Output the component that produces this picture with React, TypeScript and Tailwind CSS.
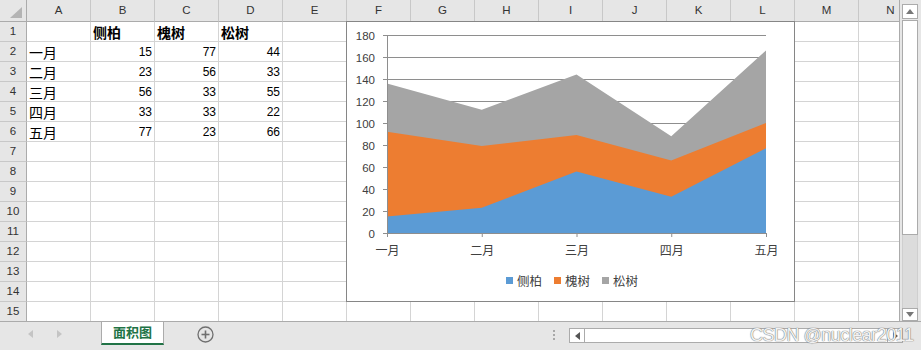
const cols = ['A', 'B', 'C', 'D', 'E', 'F', 'G', 'H', 'I', 'J', 'K', 'L', 'M', 'N']
const months = ['一月', '二月', '三月', '四月', '五月']
const values = [
  [15, 77, 44],
  [23, 56, 33],
  [56, 33, 55],
  [33, 33, 22],
  [77, 23, 66],
]
const heads = ['侧柏', '槐树', '松树']

const Cell = ({ row, col }: { row: number; col: number }) => {
  let content: React.ReactNode = null
  if (row === 1 && col >= 1 && col <= 3) {
    content = <span className="pl-[2px] pb-[1px] text-[14px] font-bold leading-none text-black">{heads[col - 1]}</span>
  } else if (row >= 2 && row <= 6 && col === 0) {
    content = <span className="pl-[2px] pb-[1px] text-[14px] leading-none text-black">{months[row - 2]}</span>
  } else if (row >= 2 && row <= 6 && col >= 1 && col <= 3) {
    content = <span className="ml-auto pr-[2px] pb-[3px] text-[12px] leading-none text-black">{values[row - 2][col - 1]}</span>
  }
  return (
    <div className="flex h-[20px] w-[64px] shrink-0 items-end border-r border-b border-[#d4d4d4] bg-white">
      {content}
    </div>
  )
}

const X0 = 40
const X1 = 419
const Y0 = 211
const k = 1.1
const xs = [0, 1, 2, 3, 4].map((i) => X0 + (i * (X1 - X0)) / 4)
const yv = (v: number) => Y0 - v * k

const cum1 = values.map((v) => v[0])
const cum2 = values.map((v) => v[0] + v[1])
const cum3 = values.map((v) => v[0] + v[1] + v[2])

const area = (arr: number[]) =>
  arr.map((v, i) => `${xs[i]},${yv(v)}`).join(' ') + ` ${X1},${Y0} ${X0},${Y0}`

const AreaChart = () => (
  <svg width="447" height="279" className="block">
    {[20, 40, 60, 80, 100, 120, 140, 160, 180].map((v) => (
      <line key={v} x1={X0} x2={X1} y1={yv(v) + 0.5} y2={yv(v) + 0.5} stroke="#8e8e8e" strokeWidth="1" />
    ))}
    <polygon points={area(cum3)} fill="#a5a5a5" />
    <polygon points={area(cum2)} fill="#ed7d31" />
    <polygon points={area(cum1)} fill="#5b9bd5" />
    <line x1={X0 + 0.5} x2={X0 + 0.5} y1={yv(180)} y2={Y0 + 0.5} stroke="#8e8e8e" />
    <line x1={X0} x2={X1 + 1} y1={Y0 + 0.5} y2={Y0 + 0.5} stroke="#8e8e8e" />
    {[0, 20, 40, 60, 80, 100, 120, 140, 160, 180].map((v) => (
      <g key={v}>
        <line x1={X0 - 4} x2={X0} y1={yv(v) + 0.5} y2={yv(v) + 0.5} stroke="#8e8e8e" />
        <text x={28} y={yv(v) + 4.5} textAnchor="end" fontSize="11.5" fill="#404040">
          {v}
        </text>
      </g>
    ))}
    {xs.map((x, i) => (
      <g key={i}>
        <line x1={x + 0.5} x2={x + 0.5} y1={Y0} y2={Y0 + 4} stroke="#8e8e8e" />
        <text x={x + 0.5} y={Y0 + 22} textAnchor="middle" fontSize="12" fill="#404040">
          {months[i]}
        </text>
      </g>
    ))}
    {[
      ['#5b9bd5', '侧柏'],
      ['#ed7d31', '槐树'],
      ['#a5a5a5', '松树'],
    ].map(([c, t], i) => (
      <g key={t}>
        <rect x={159 + i * 48} y={255} width="7" height="7" fill={c} />
        <text x={170 + i * 48} y={263.5} fontSize="12.5" fill="#404040">
          {t}
        </text>
      </g>
    ))}
  </svg>
)

const App = () => {
  return (
    <div className="relative h-[350px] w-[921px] overflow-hidden bg-white font-['Liberation_Sans','Noto_Sans_CJK_SC',sans-serif]">
      <div className="flex h-[321px]">
        {/* sheet */}
        <div className="relative w-[899px] overflow-hidden">
          <div className="flex h-[22px] bg-[#e6e6e6]">
            <div className="relative h-[22px] w-[27px] shrink-0 border-r border-b border-[#ababab]">
              <svg width="26" height="21" className="absolute left-0 top-0">
                <polygon points="10,18 22,18 22,7" fill="#b4b4b4" />
              </svg>
            </div>
            {cols.map((c) => (
              <div
                key={c}
                className="flex h-[22px] w-[64px] shrink-0 items-center justify-center border-r border-b border-r-[#c8c8c8] border-b-[#ababab] text-[11.5px] text-[#333]"
              >
                {c}
              </div>
            ))}
          </div>
          {Array.from({ length: 15 }, (_, r) => r + 1).map((r) => (
            <div key={r} className="flex">
              <div className="flex h-[20px] w-[27px] shrink-0 items-center justify-center border-r border-b border-r-[#ababab] border-b-[#c8c8c8] bg-[#e6e6e6] text-[11.5px] text-[#333]">
                {r}
              </div>
              {cols.map((c, ci) => (
                <Cell key={c} row={r} col={ci} />
              ))}
            </div>
          ))}
          {/* chart object */}
          <div className="absolute left-[346px] top-[21px] h-[281px] w-[449px] border border-[#868686] bg-white">
            <AreaChart />
          </div>
        </div>
        {/* vertical scrollbar */}
        <div className="flex w-[22px] flex-col border-l border-[#ababab] bg-[#e6e6e6] pl-[2px] pt-[4px]">
          <div className="flex h-[15px] w-[16px] items-center justify-center border border-[#ababab] bg-white">
            <svg width="8" height="5">
              <polygon points="0,5 8,5 4,0" fill="#777" />
            </svg>
          </div>
          <div className="mt-[1px] h-[215px] w-[16px] border border-[#ababab] bg-white" />
          <div className="h-[73px] w-[16px] border-x border-[#cfcfcf] bg-[#dcdcdc]" />
          <div className="flex h-[13px] w-[16px] items-center justify-center border border-[#ababab] bg-white">
            <svg width="8" height="5">
              <polygon points="0,0 8,0 4,5" fill="#777" />
            </svg>
          </div>
        </div>
      </div>
      {/* sheet tabs bar */}
      <div className="flex h-[29px] items-start border-t border-[#ababab] bg-[#e6e6e6]">
        <div className="flex w-[101px] items-center pt-[8px]">
          <svg width="5" height="8" className="ml-[28px]">
            <polygon points="5,0 5,8 0,4" fill="#c4c4c4" />
          </svg>
          <svg width="5" height="8" className="ml-[24px]">
            <polygon points="0,0 0,8 5,4" fill="#c4c4c4" />
          </svg>
        </div>
        <div className="flex h-[23px] w-[63px] items-center justify-center border-x border-b-2 border-x-[#ababab] border-b-[#217346] bg-white text-[13px] font-bold text-[#217346]">
          面积图
        </div>
        <svg width="17" height="17" className="ml-[33px] mt-[4px]">
          <circle cx="8.5" cy="8.5" r="7.5" fill="none" stroke="#707070" strokeWidth="1.3" />
          <line x1="8.5" x2="8.5" y1="4.5" y2="12.5" stroke="#707070" strokeWidth="1.6" />
          <line x1="4.5" x2="12.5" y1="8.5" y2="8.5" stroke="#707070" strokeWidth="1.6" />
        </svg>
        <div className="ml-[339px] mt-[8px] flex flex-col gap-[2px]">
          <div className="h-[2px] w-[2px] bg-[#a8a8a8]" />
          <div className="h-[2px] w-[2px] bg-[#a8a8a8]" />
          <div className="h-[2px] w-[2px] bg-[#a8a8a8]" />
        </div>
        <div className="ml-[14px] mt-[6px] flex h-[15px] w-[334px] border border-[#ababab] bg-white">
          <div className="flex w-[15px] items-center justify-center border-r border-[#ababab]">
            <svg width="5" height="8">
              <polygon points="5,0 5,8 0,4" fill="#555" />
            </svg>
          </div>
          <div className="flex-1" />
          <div className="flex w-[15px] items-center justify-center border-l border-[#ababab]">
            <svg width="5" height="8">
              <polygon points="0,0 0,8 5,4" fill="#555" />
            </svg>
          </div>
        </div>
      </div>
      <div className="absolute left-[750px] top-[326px] text-[18px] leading-none tracking-[-0.5px] text-[#f2f2f2] [text-shadow:0_0_1px_#6f6f6f,0_0_1px_#6f6f6f]">
        CSDN @nuclear2011
      </div>
    </div>
  )
}

export default App
